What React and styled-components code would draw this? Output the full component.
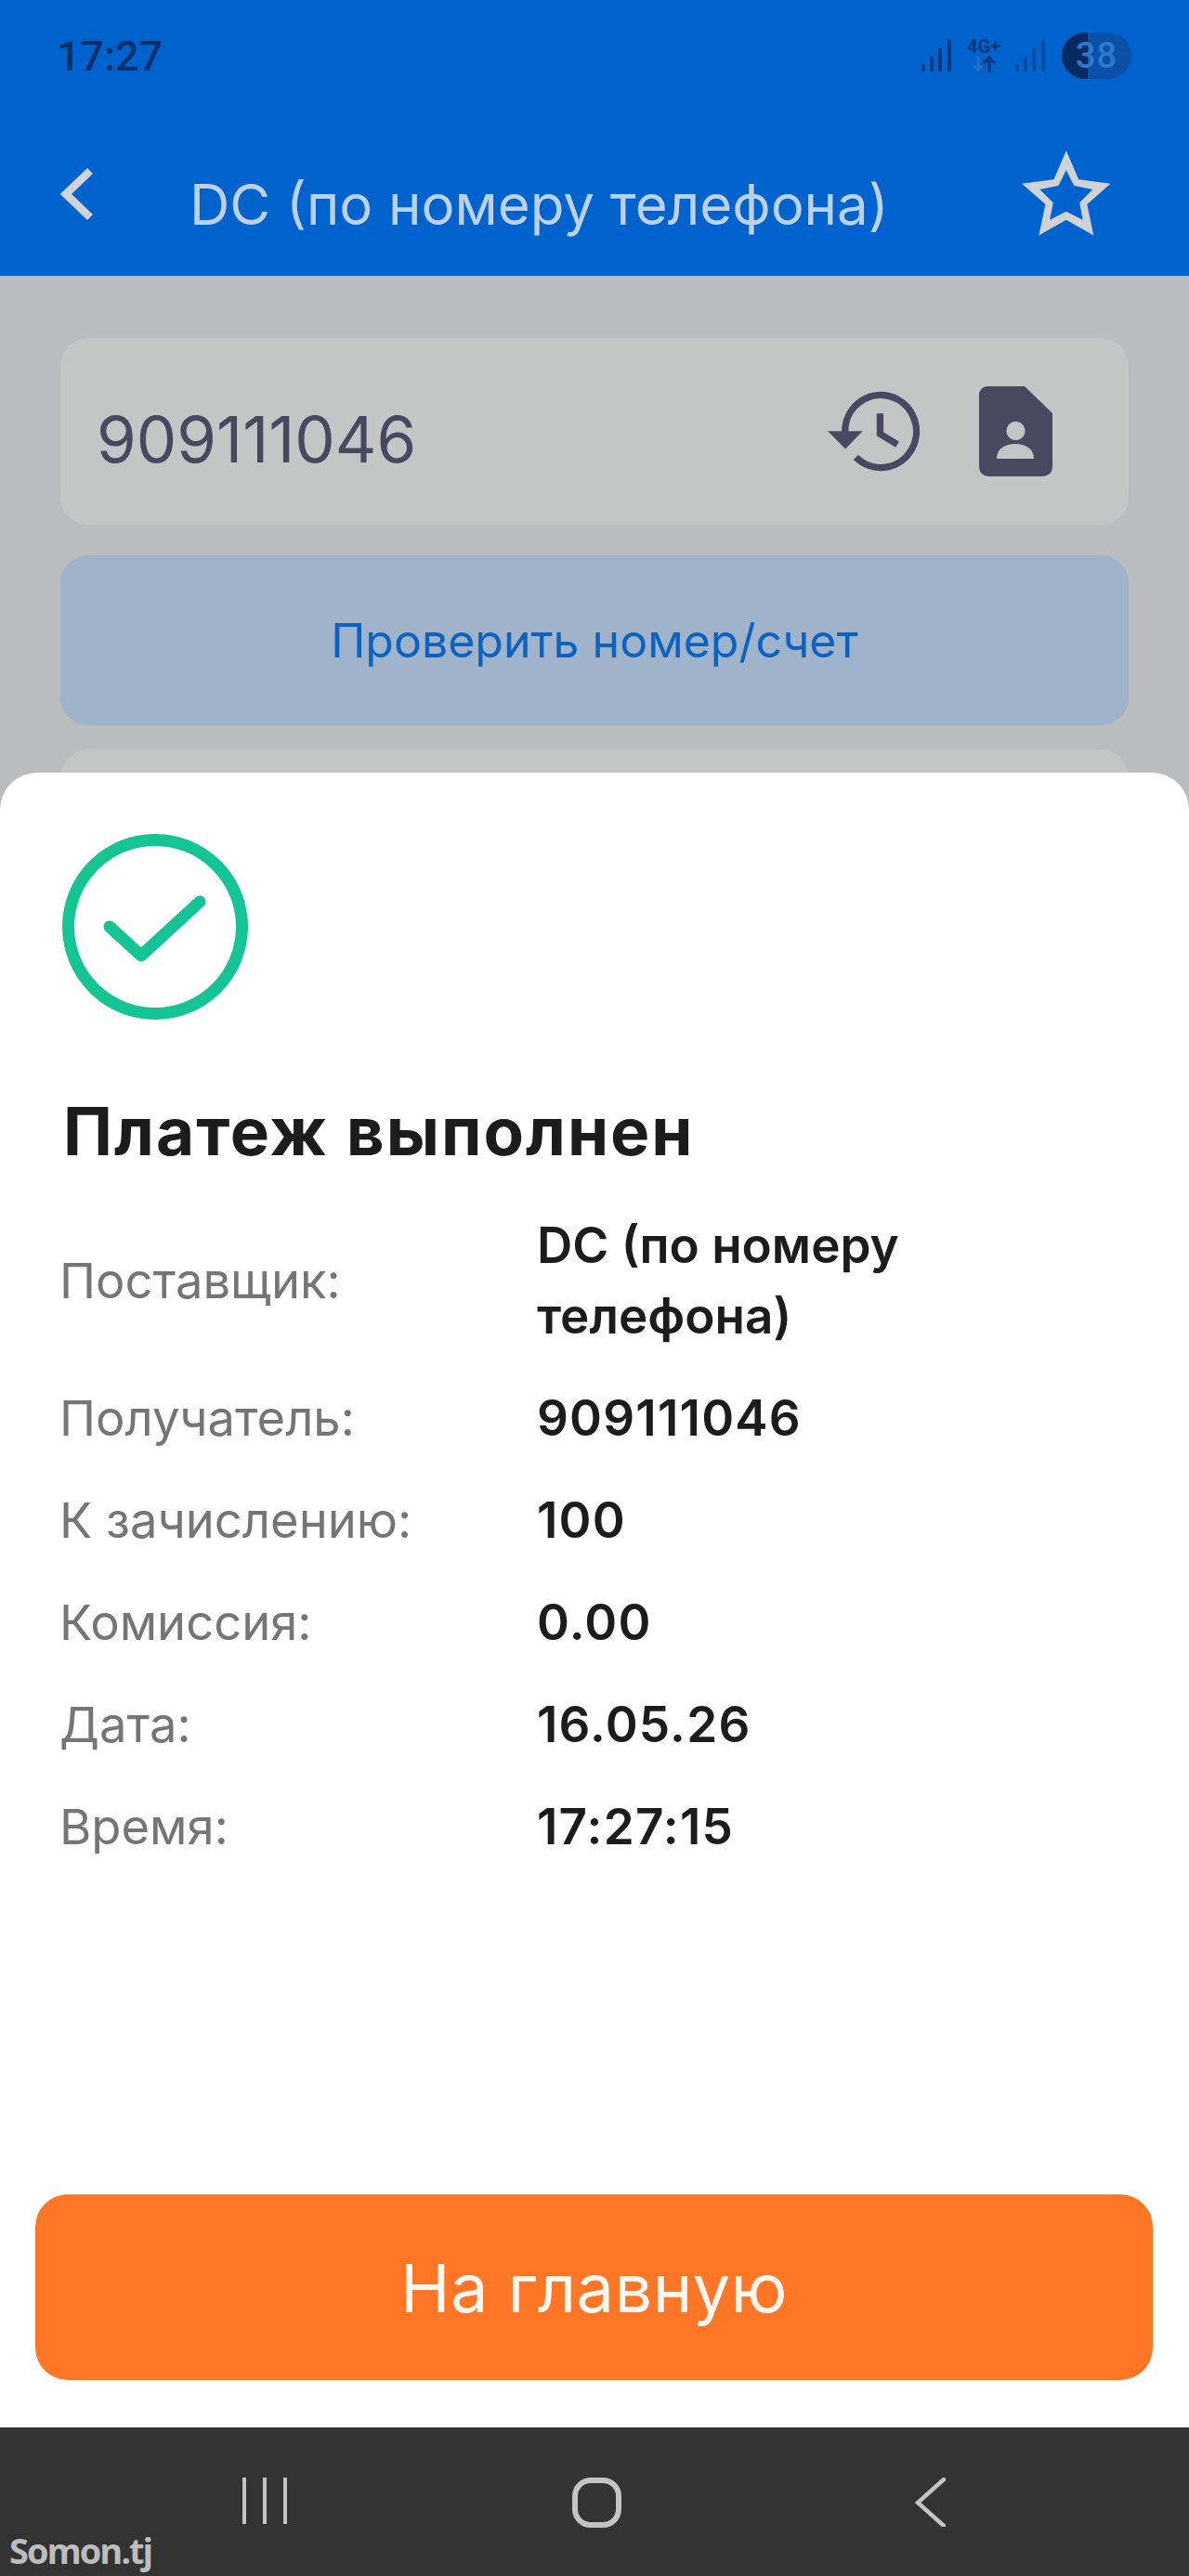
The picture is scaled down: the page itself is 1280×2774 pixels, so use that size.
import React from 'react';
import styled, { createGlobalStyle } from 'styled-components';

const FONT = 'Inter, "Liberation Sans", sans-serif';

const details = [
  { label: 'Поставщик:', value: 'DC (по номеру телефона)' },
  { label: 'Получатель:', value: '909111046', numeric: true },
  { label: 'К зачислению:', value: '100', numeric: true },
  { label: 'Комиссия:', value: '0.00', numeric: true },
  { label: 'Дата:', value: '16.05.26', numeric: true },
  { label: 'Время:', value: '17:27:15', numeric: true }
];

const GlobalStyle = createGlobalStyle`
  html, body {
    margin: 0;
    padding: 0;
    background: #fff;
  }
  * {
    box-sizing: border-box;
  }
`;

const Screen = styled.div`
  position: relative;
  display: flex;
  flex-direction: column;
  width: 1280px;
  height: 2774px;
  overflow: hidden;
  font-family: ${FONT};
`;

const Header = styled.header`
  display: flex;
  flex-direction: column;
  height: 297px;
  background: #0062cc;
`;

const StatusBar = styled.div`
  display: flex;
  align-items: center;
  justify-content: space-between;
  height: 120px;
  padding: 0 62px 0 61px;
`;

const Clock = styled.span`
  font-family: Roboto, sans-serif;
  font-size: 45px;
  font-weight: 500;
  color: #04306c;
`;

const StatusIcons = styled.div`
  display: flex;
  align-items: center;
`;

const Signal = styled.svg`
  display: block;
  width: 32px;
  height: 34px;
  opacity: ${(props) => (props.$faint ? 0.55 : 1)};
`;

const NetworkType = styled.div`
  display: flex;
  flex-direction: column;
  align-items: center;
  width: 38px;
  margin: 0 15px 0 16px;
  color: #07397e;
`;

const NetworkLabel = styled.span`
  font-family: Roboto, sans-serif;
  font-size: 20px;
  line-height: 17px;
  font-weight: 700;
  white-space: nowrap;
`;

const NetworkArrows = styled.svg`
  display: block;
  width: 30px;
  height: 20px;
`;

const Battery = styled.div`
  display: flex;
  align-items: center;
  justify-content: center;
  width: 75px;
  height: 50px;
  margin-left: 18px;
  border-radius: 25px;
  background: linear-gradient(90deg, #042a62 0 28px, #0a4fa8 28px);
  font-family: Roboto, sans-serif;
  font-size: 38px;
  font-weight: 500;
  letter-spacing: 1px;
  color: #2f78d0;
`;

const NavBar = styled.div`
  display: flex;
  align-items: center;
  height: 177px;
  padding: 0 84px 0 65px;
`;

const BackIcon = styled.svg`
  display: block;
  flex: none;
  width: 37px;
  height: 58px;
  margin: 0 102px 0 0;
`;

const Title = styled.h1`
  flex: 1;
  margin: 0;
  padding-top: 22px;
  font-size: 60px;
  line-height: 66px;
  font-weight: 400;
  white-space: nowrap;
  color: #bcd0e8;
`;

const StarIcon = styled.svg`
  display: block;
  flex: none;
  width: 96px;
  height: 92px;
  margin-bottom: 2px;
`;

const Backdrop = styled.main`
  display: flex;
  flex-direction: column;
  flex: 1;
  padding: 67px 65px 0;
  background: #babcbd;
`;

const InputCard = styled.div`
  display: flex;
  flex: none;
  align-items: center;
  height: 201px;
  padding: 0 82px 0 39px;
  border-radius: 30px;
  background: #c4c5c5;
`;

const NumberValue = styled.span`
  flex: 1;
  padding-top: 16px;
  font-size: 69px;
  font-weight: 400;
  color: #484860;
`;

const InputIcon = styled.svg`
  display: block;
  flex: none;
  margin-left: ${(props) => props.$gap || 0}px;
`;

const CheckButton = styled.div`
  display: flex;
  flex: none;
  align-items: center;
  justify-content: center;
  height: 183px;
  margin-top: 33px;
  border-radius: 30px;
  background: #9fb3ca;
  font-size: 50px;
  color: #0b62c0;
`;

const GhostCard = styled.div`
  flex: none;
  height: 120px;
  margin-top: 26px;
  border-radius: 30px;
  background: #c4c5c5;
`;

const Sheet = styled.section`
  position: absolute;
  top: 832px;
  left: 0;
  right: 0;
  bottom: 160px;
  display: flex;
  flex-direction: column;
  padding: 66px 39px 51px 38px;
  border-radius: 40px 40px 0 0;
  background: #fff;
`;

const SuccessIcon = styled.svg`
  display: block;
  flex: none;
  width: 200px;
  height: 200px;
  margin-left: 29px;
`;

const Heading = styled.h2`
  margin: 78px 0 0 30px;
  font-size: 71px;
  line-height: 84px;
  font-weight: 700;
  letter-spacing: 2px;
  color: #1c1c1c;
`;

const DetailList = styled.dl`
  display: grid;
  grid-template-columns: 514px 400px;
  row-gap: 34px;
  align-items: center;
  margin: 43px 0 0 26px;
`;

const DetailLabel = styled.dt`
  font-size: 52.500px;
  line-height: 76px;
  color: #757575;
`;

const DetailValue = styled.dd`
  margin: 0;
  font-size: 53px;
  line-height: 76px;
  font-weight: 600;
  letter-spacing: ${(props) => (props.$numeric ? '1.200px' : 0)};
  color: #1c1c1c;
`;

const HomeButton = styled.div`
  display: flex;
  align-items: center;
  justify-content: center;
  height: 200px;
  margin-top: auto;
  border-radius: 35px;
  background: #ff7626;
  font-size: 72px;
  letter-spacing: 0.500px;
  color: #fff8f0;
`;

const SystemBar = styled.nav`
  position: absolute;
  left: 0;
  right: 0;
  bottom: 0;
  display: flex;
  align-items: flex-start;
  height: 160px;
  padding: 54px 0 0 261px;
  background: #333;
`;

const SystemIcon = styled.svg`
  display: block;
  flex: none;
  margin-left: ${(props) => props.$gap || 0}px;
`;

const Watermark = styled.span`
  position: absolute;
  left: 10px;
  bottom: 2px;
  font-family: "Open Sans", sans-serif;
  font-size: 38px;
  font-weight: 700;
  letter-spacing: -2px;
  color: #bdbdbd;
`;

const SignalBars = ({ faint }) => (
  <Signal viewBox="0 0 32 34" $faint={faint} fill="#07397e">
    <rect x="0" y="26" width="4" height="8" rx="2" />
    <rect x="9" y="18" width="4" height="16" rx="1" />
    <rect x="18" y="9" width="4" height="25" rx="1" />
    <rect x="28" y="0" width="4" height="34" rx="1" />
  </Signal>
);

const App = () => (
  <Screen>
    <GlobalStyle />
    <Header>
      <StatusBar>
        <Clock>17:27</Clock>
        <StatusIcons>
          <SignalBars />
          <NetworkType>
            <NetworkLabel>4G+</NetworkLabel>
            <NetworkArrows viewBox="0 0 30 20">
              <path d="M9 2v14M5 12l4 5 4-5" fill="none" stroke="#2a6fc0" strokeWidth="3" />
              <path d="M21 19V3M15 9l6-6 6 6" fill="none" stroke="#07397e" strokeWidth="3.5" />
            </NetworkArrows>
          </NetworkType>
          <SignalBars faint />
          <Battery>38</Battery>
        </StatusIcons>
      </StatusBar>
      <NavBar>
        <BackIcon viewBox="0 0 37 58">
          <path d="M32 4 6 29l26 25" fill="none" stroke="#cfd3d8" strokeWidth="8.500" />
        </BackIcon>
        <Title>DC (по номеру телефона)</Title>
        <StarIcon viewBox="182 72 287 274">
          <path
            fillRule="evenodd"
            fill="#cfd3d8"
            d="M325 72 365 165 468 178 392 245 413 345 325 295 237 345 258 245 182 178 285 165ZM325 135 300 185 240 197 283 240 272 295 325 268 378 295 368 240 410 197 350 185Z"
          />
        </StarIcon>
      </NavBar>
    </Header>
    <Backdrop>
      <InputCard>
        <NumberValue>909111046</NumberValue>
        <InputIcon viewBox="92 92 304 263" width="101" height="87">
          <path d="M148 226A116 118 0 1 1 183 308" fill="none" stroke="#484860" strokeWidth="22" />
          <path d="M92 223H205L149 281Z" fill="#484860" />
          <path d="M262 165V232L318 266" fill="none" stroke="#484860" strokeWidth="22" />
        </InputIcon>
        <InputIcon $gap={62} viewBox="0 0 79 97" width="79" height="97">
          <path
            fill="#484860"
            fillRule="evenodd"
            d="M9 0H49L79 29V87A10 10 0 0 1 69 97H10A10 10 0 0 1 0 87V9A9 9 0 0 1 9 0ZM39.500 38a10 10 0 1 0 .01 0ZM19 78H59C59 67 50 62 39 62S19 67 19 78Z"
          />
        </InputIcon>
      </InputCard>
      <CheckButton>Проверить номер/счет</CheckButton>
      <GhostCard />
    </Backdrop>
    <Sheet>
      <SuccessIcon viewBox="0 0 200 200">
        <circle cx="100" cy="100" r="93.500" fill="none" stroke="#14c495" strokeWidth="13" />
        <path
          d="M51 100 85 131 148 73"
          fill="none"
          stroke="#14c495"
          strokeWidth="13"
          strokeLinecap="round"
          strokeLinejoin="round"
        />
      </SuccessIcon>
      <Heading>Платеж выполнен</Heading>
      <DetailList>
        {details.map((item) => (
          <React.Fragment key={item.label}>
            <DetailLabel>{item.label}</DetailLabel>
            <DetailValue $numeric={item.numeric}>{item.value}</DetailValue>
          </React.Fragment>
        ))}
      </DetailList>
      <HomeButton>На главную</HomeButton>
    </Sheet>
    <SystemBar>
      <SystemIcon viewBox="0 0 48 50" width="48" height="50">
        <path d="M2 0v50M24 0v50M46 0v50" fill="none" stroke="#c4c4c4" strokeWidth="4" />
      </SystemIcon>
      <SystemIcon $gap={307} viewBox="0 0 53 54" width="53" height="54">
        <rect x="3" y="3" width="47" height="48" rx="17" fill="none" stroke="#c4c4c4" strokeWidth="6" />
      </SystemIcon>
      <SystemIcon $gap={316} viewBox="0 0 33 53" width="33" height="53">
        <path d="M31 2 3 27l28 25" fill="none" stroke="#c4c4c4" strokeWidth="4.500" strokeLinecap="round" />
      </SystemIcon>
      <Watermark>Somon.tj</Watermark>
    </SystemBar>
  </Screen>
);

export default App;
